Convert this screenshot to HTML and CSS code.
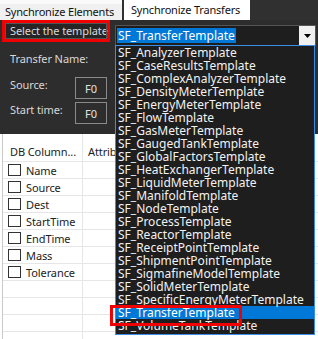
FILE: index.html
```html
<!DOCTYPE html>
<html lang="en">
<head>
  <meta charset="UTF-8" />
  <title>Synchronize Transfers</title>
  <link rel="stylesheet" href="styles.css">
</head>
<body>
  <div class="tabs">
    <div class="tab">Synchronize Elements</div>
    <div class="tab active">Synchronize Transfers</div>
  </div>

  <div class="panel">
    <div class="row-top">
      <div class="label-box">Select the template</div>
      <div class="combo">
        <div class="combo-field"><span class="combo-sel">SF_TransferTemplate</span></div>
        <div class="combo-btn">
          <svg width="7" height="4" viewBox="0 0 7 4"><path d="M0 0h7L3.5 4z" fill="#000"/></svg>
        </div>
      </div>
    </div>
    <div class="field name"><span class="lbl">Transfer Name:</span></div>
    <div class="field"><span class="lbl">Source:</span><span class="fbox">F0</span></div>
    <div class="field"><span class="lbl">Start time:</span><span class="fbox">F0</span></div>
  </div>

  <div class="grid">
    <div class="grid-head">
      <div class="cell c1">DB Column...</div>
      <div class="cell c2">Attributes</div>
    </div>
    <div class="grid-row"><div class="cell c1"><span class="chk"></span>Name</div><div class="cell c2"></div></div>
    <div class="grid-row"><div class="cell c1"><span class="chk"></span>Source</div><div class="cell c2"></div></div>
    <div class="grid-row"><div class="cell c1"><span class="chk"></span>Dest</div><div class="cell c2"></div></div>
    <div class="grid-row"><div class="cell c1"><span class="chk"></span>StartTime</div><div class="cell c2"></div></div>
    <div class="grid-row"><div class="cell c1"><span class="chk"></span>EndTime</div><div class="cell c2"></div></div>
    <div class="grid-row"><div class="cell c1"><span class="chk"></span>Mass</div><div class="cell c2"></div></div>
    <div class="grid-row"><div class="cell c1"><span class="chk"></span>Tolerance</div><div class="cell c2"></div></div>
    <div class="grid-row"><div class="cell c1"></div><div class="cell c2"></div></div>
    <div class="grid-row"><div class="cell c1"></div><div class="cell c2"></div></div>
    <div class="grid-row"><div class="cell c1"></div><div class="cell c2"></div></div>
    <div class="grid-row"><div class="cell c1"></div><div class="cell c2"></div></div>
  </div>

  <!-- open dropdown of the template combo -->
  <ul class="droplist">
    <li>SF_AnalyzerTemplate</li>
    <li>SF_CaseResultsTemplate</li>
    <li>SF_ComplexAnalyzerTemplate</li>
    <li>SF_DensityMeterTemplate</li>
    <li>SF_EnergyMeterTemplate</li>
    <li>SF_FlowTemplate</li>
    <li>SF_GasMeterTemplate</li>
    <li>SF_GaugedTankTemplate</li>
    <li>SF_GlobalFactorsTemplate</li>
    <li>SF_HeatExchangerTemplate</li>
    <li>SF_LiquidMeterTemplate</li>
    <li>SF_ManifoldTemplate</li>
    <li>SF_NodeTemplate</li>
    <li>SF_ProcessTemplate</li>
    <li>SF_ReactorTemplate</li>
    <li>SF_ReceiptPointTemplate</li>
    <li>SF_ShipmentPointTemplate</li>
    <li>SF_SigmafineModelTemplate</li>
    <li>SF_SolidMeterTemplate</li>
    <li>SF_SpecificEnergyMeterTemplate</li>
    <li class="selected">SF_TransferTemplate</li>
    <li>SF_VolumeTankTemplate</li>
  </ul>
  <div class="mark"></div>
</body>
</html>
```

FILE: styles.css
```css
body {
  margin: 0;
  width: 318px;
  height: 339px;
  overflow: hidden;
  position: relative;
  background: #ffffff;
  font-family: "Noto Sans", "Open Sans", sans-serif;
  font-size: 12px;
  white-space: nowrap;
}

.tabs {
  display: flex;
  height: 20px;
  background: #303030;
  font-size: 11px;
  letter-spacing: -0.2px;
}

.tab {
  margin-top: 4px;
  width: 117px;
  padding-left: 5px;
  background: #f0f0f0;
  color: #111;
  line-height: 16px;
  box-shadow: 0 -4px 0 #fafafa;
}

.tab.active {
  margin-top: 0;
  margin-left: 2px;
  width: 119px;
  padding-left: 7px;
  background: #ffffff;
  line-height: 20px;
  box-shadow: none;
}

.panel {
  height: 114px;
  background: #2d2d2d;
  color: #d8d8d8;
  font-size: 11px;
  letter-spacing: -0.1px;
}

.row-top {
  display: flex;
  align-items: flex-start;
  height: 31px;
}

.label-box {
  margin-left: 2px;
  width: 97px;
  height: 16px;
  padding: 0 0 0 5px;
  border: 3px solid #f00000;
  background: #252525;
  color: #d8d8d8;
  line-height: 16px;
  outline: 1px solid #555;
  outline-offset: -4px;
}

.combo {
  display: flex;
  margin: 5px 0 0 5px;
  width: 199px;
  height: 19px;
  border: 1px solid #555;
  background: #1e1e1e;
  font-size: 12px;
  letter-spacing: 0;
}

.combo-field {
  flex: 1;
  padding: 1px 0 0 1px;
}

.combo-sel {
  display: inline-block;
  background: #0078d7;
  color: #fff;
  line-height: 15px;
  padding: 0 1px;
}

.combo-btn {
  width: 16px;
  background: #f0f0f0;
  display: flex;
  align-items: center;
  justify-content: center;
}

.field {
  display: flex;
  align-items: center;
  height: 25px;
  padding-left: 10px;
}

.field.name {
  height: 24px;
  align-items: flex-start;
  line-height: 16px;
}

.lbl {
  width: 65px;
  margin-top: -6px;
}

.field.name .lbl {
  margin-top: 0;
}

.fbox {
  width: 30px;
  height: 20px;
  border: 1px solid #8a8a8a;
  text-align: center;
  line-height: 22px;
  color: #e0e0e0;
}

.grid {
  margin-left: 2px;
  border-left: 1px solid #c8c8c8;
  background: #fff;
  color: #222;
  font-size: 11px;
  letter-spacing: -0.1px;
}

.grid-head,
.grid-row {
  display: flex;
}

.grid-head {
  height: 27px;
}

.grid-head .cell {
  padding-top: 10px;
  align-items: flex-start;
  line-height: 16px;
}

.grid-row {
  height: 17px;
  border-top: 1px solid #e6e6e6;
  box-sizing: border-box;
}

.cell {
  display: flex;
  align-items: center;
  box-sizing: border-box;
}

.c1 {
  width: 80px;
  padding-left: 5px;
  border-right: 1px solid #e6e6e6;
}

.grid-head .c1 {
  padding-left: 7px;
}

.c2 {
  padding-left: 5px;
}

.chk {
  width: 13px;
  height: 12px;
  border: 1px solid #333;
  margin-right: 5px;
  box-sizing: border-box;
  flex: none;
}

.droplist {
  position: absolute;
  left: 115px;
  top: 45px;
  width: 198px;
  margin: 0;
  padding: 0 0 2px;
  list-style: none;
  border: 1px solid #3a8ee6;
  background: #1e1e1e;
  color: #f2f2f2;
}

.droplist li {
  height: 13px;
  line-height: 13px;
  padding-left: 2px;
}

.droplist li.selected {
  background: #0078d7;
  color: #fff;
}

.mark {
  position: absolute;
  left: 110px;
  top: 305px;
  width: 126px;
  height: 15px;
  border: 3px solid #f00000;
}
```
